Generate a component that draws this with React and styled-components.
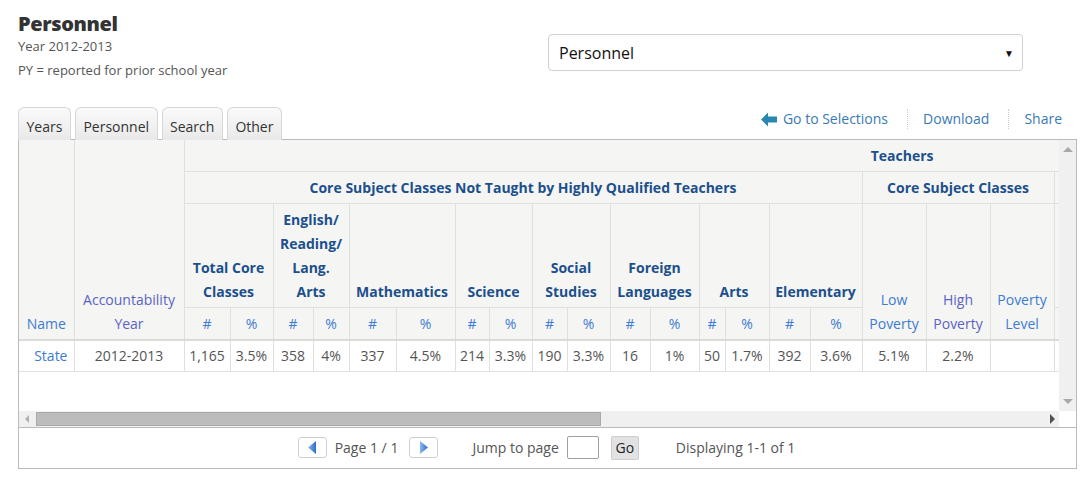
import React from "react";
import styled, { createGlobalStyle } from "styled-components";

const Global = createGlobalStyle`
  html, body { margin: 0; padding: 0; background: #fff; }
  body { font-family: "Open Sans", "Liberation Sans", sans-serif; color: #555; }
  * { box-sizing: border-box; }
`;

const Page = styled.div`
  width: 1084px;
  padding: 11px 7px 0 18px;
`;

const TopRow = styled.div`
  display: flex;
  align-items: flex-start;
`;

const TitleBlock = styled.div`
  width: 530px;
`;

const Title = styled.h1`
  margin: 0;
  font-size: 20px;
  line-height: 26px;
  font-weight: 800;
  color: #333;
  letter-spacing: -0.4px;
`;

const SubLine = styled.div`
  font-size: 13px;
  line-height: 18px;
  color: #555;
  margin-top: ${(p) => p.$mt || 0}px;
`;

const SelectBox = styled.div`
  margin-top: 23px;
  width: 475px;
  height: 37px;
  border: 1px solid #d0d0d0;
  border-radius: 4px;
  display: flex;
  align-items: center;
  justify-content: space-between;
  padding: 0 8px 0 10px;
  font-size: 16px;
  color: #111;
`;

const Caret = styled.span`
  font-size: 10px;
  color: #111;
`;

const TabRow = styled.div`
  margin-top: 28px;
  display: flex;
  justify-content: space-between;
  align-items: flex-start;
  height: 32px;
  position: relative;
  z-index: 1;
`;

const Tabs = styled.div`
  display: flex;
  gap: 4px;
`;

const Tab = styled.div`
  height: 33px;
  padding: 4px 7.5px 0;
  display: flex;
  align-items: center;
  font-size: 14px;
  color: #333;
  border: 1px solid #d6d6d6;
  border-bottom: none;
  border-radius: 6px 6px 0 0;
  background: linear-gradient(#fafafa, #e9e9e9);
`;

const Links = styled.div`
  display: flex;
  align-items: center;
  margin-top: 2px;
`;

const LinkItem = styled.a`
  display: flex;
  align-items: center;
  gap: 6px;
  padding: 0 ${(p) => (p.$last ? 15 : 19)}px 0 ${(p) => (p.$sep ? 15 : 16)}px;
  font-size: 14px;
  line-height: 20px;
  color: #3a7ab4;
  text-decoration: none;
  border-left: ${(p) => (p.$sep ? "1px dotted #cfcfcf" : "none")};
`;

const Grid = styled.div`
  width: 1059px;
  border: 1px solid #bbb;
  background: #fff;
`;

const ScrollArea = styled.div`
  display: grid;
  grid-template-columns: 1040px 17px;
  grid-template-rows: 271px 16px;
`;

const Viewport = styled.div`
  overflow: hidden;
  width: 1040px;
  height: 271px;
`;

const Table = styled.table`
  border-collapse: collapse;
  table-layout: fixed;
  font-size: 14px;
`;

const HeadCell = styled.th`
  background: #f5f6f4;
  border: 1px solid #dfe1de;
  border-top: none;
  padding: 4px 4px 3px;
  line-height: 24px;
  text-align: center;
  vertical-align: ${(p) => (p.$top ? "middle" : "bottom")};
  font-weight: ${(p) => (p.$leaf ? 400 : 700)};
  color: ${(p) => (p.$leaf ? (p.$visited ? "#5b62c6" : "#3d7bd2") : "#1c4f8c")};
  border-bottom: ${(p) => (p.$last ? "2px solid #d9dbd8" : "1px solid #dfe1de")};
  &:first-child { border-left: none; }
`;

const DataCell = styled.td`
  border: 1px solid #dfe1de;
  padding: 4px;
  height: 31px;
  line-height: 22px;
  text-align: ${(p) => (p.$right ? "right" : "center")};
  padding-right: ${(p) => (p.$right ? 6 : 4)}px;
  color: ${(p) => (p.$link ? "#3d7bd2" : "#555")};
  white-space: nowrap;
  &:first-child { border-left: none; }
`;

const VTrack = styled.div`
  background: #f0f0f0;
  display: flex;
  flex-direction: column;
  justify-content: space-between;
  align-items: center;
  padding: 7px 0 7px;
`;

const HTrack = styled.div`
  background: #f0f0f0;
  display: flex;
  align-items: center;
  padding: 0 4px 0 6px;
  gap: 7px;
`;

const Thumb = styled.div`
  height: 14px;
  width: 565px;
  background: #bcbcbc;
  border: 1px solid #a9a9a9;
`;

const Spacer = styled.div`
  flex: 1;
`;

const Corner = styled.div`
  background: #fff;
`;

const Pager = styled.div`
  border-top: 1px solid #bbb;
  height: 41px;
  display: flex;
  align-items: center;
  justify-content: center;
  font-size: 14px;
  color: #555;
  padding-right: 2px;
  padding-bottom: 1px;
`;

const PagerGroup = styled.div`
  display: flex;
  align-items: center;
  gap: ${(p) => p.$gap}px;
  margin-right: ${(p) => p.$mr || 0}px;
`;

const NavButton = styled.button`
  width: 29px;
  height: 21px;
  border: 1px solid #cfcfcf;
  border-radius: 3px;
  background: #fff;
  display: flex;
  align-items: center;
  justify-content: center;
  padding: 0;
  margin-left: ${(p) => p.$ml || 0}px;
`;

const PageInput = styled.div`
  width: 32px;
  height: 23px;
  border: 1px solid #a0a0a0;
  border-radius: 2px;
  background: #fff;
`;

const GoButton = styled.button`
  height: 24px;
  width: 28px;
  padding: 0;
  font-family: "Open Sans", "Liberation Sans", sans-serif;
  font-size: 14px;
  color: #222;
  background: #e2e2e2;
  border: 1px solid #cdcdcd;
  border-radius: 2px;
  margin-left: 4px;
`;

const ArrowLeftIcon = () => (
  <svg width="16" height="15" viewBox="0 0 16 15">
    <polygon points="0,7.5 7,0.5 7,4.5 16,4.5 16,10.5 7,10.5 7,14.5" fill="#2a88b0" />
  </svg>
);

const Tri = ({ dir, color, size = 5 }) => {
  const s = size;
  const pts =
    dir === "left"
      ? `${s},0 ${s},${2 * s} 0,${s}`
      : dir === "right"
      ? `0,0 0,${2 * s} ${s},${s}`
      : dir === "up"
      ? `0,${s} ${2 * s},${s} ${s},0`
      : `0,0 ${2 * s},0 ${s},${s}`;
  const w = dir === "left" || dir === "right" ? s : 2 * s;
  const h = dir === "left" || dir === "right" ? 2 * s : s;
  return (
    <svg width={w} height={h} viewBox={`0 0 ${w} ${h}`}>
      <polygon points={pts} fill={color} />
    </svg>
  );
};

const PagerArrow = ({ dir }) => (
  <svg width="8" height="13" viewBox="0 0 8 13">
    <defs>
      <linearGradient id={`pg-${dir}`} x1="0" x2="1" y1="0" y2="0">
        <stop offset="0" stopColor="#8bb8ee" />
        <stop offset="1" stopColor="#2c6cc8" />
      </linearGradient>
    </defs>
    <polygon
      points={dir === "left" ? "8,0 8,13 0,6.5" : "0,0 0,13 8,6.5"}
      fill={`url(#pg-${dir})`}
    />
  </svg>
);

const widths = [
  55, 110, 46, 43, 40, 36, 47, 59, 34, 43, 35, 43, 40, 49, 26, 44, 41, 52, 64, 64, 64,
  70, 70, 70, 70, 71, 72, 71, 72, 79, 79, 79,
];
const tableWidth = widths.reduce((a, b) => a + b, 0);

const subjects = [
  { label: ["Total Core", "Classes"], data: ["1,165", "3.5%"] },
  { label: ["English/", "Reading/", "Lang.", "Arts"], data: ["358", "4%"] },
  { label: ["Mathematics"], data: ["337", "4.5%"] },
  { label: ["Science"], data: ["214", "3.3%"] },
  { label: ["Social", "Studies"], data: ["190", "3.3%"] },
  { label: ["Foreign", "Languages"], data: ["16", "1%"] },
  { label: ["Arts"], data: ["50", "1.7%"] },
  { label: ["Elementary"], data: ["392", "3.6%"] },
];

const Lines = ({ items }) =>
  items.map((t, i) => (
    <React.Fragment key={i}>
      {i > 0 && <br />}
      {t}
    </React.Fragment>
  ));

export default function App() {
  return (
    <>
      <Global />
      <Page>
        <TopRow>
          <TitleBlock>
            <Title>Personnel</Title>
            <SubLine>Year 2012-2013</SubLine>
            <SubLine $mt={6}>PY = reported for prior school year</SubLine>
          </TitleBlock>
          <SelectBox>
            <span>Personnel</span>
            <Caret>▼</Caret>
          </SelectBox>
        </TopRow>

        <TabRow>
          <Tabs>
            <Tab>Years</Tab>
            <Tab>Personnel</Tab>
            <Tab>Search</Tab>
            <Tab>Other</Tab>
          </Tabs>
          <Links>
            <LinkItem>
              <ArrowLeftIcon />
              Go to Selections
            </LinkItem>
            <LinkItem $sep>Download</LinkItem>
            <LinkItem $sep $last>Share</LinkItem>
          </Links>
        </TabRow>

        <Grid>
          <ScrollArea>
            <Viewport>
              <Table style={{ width: tableWidth }}>
                <colgroup>
                  {widths.map((w, i) => (
                    <col key={i} style={{ width: w }} />
                  ))}
                </colgroup>
                <thead>
                  <tr>
                    <HeadCell $leaf rowSpan={4} $last>Name</HeadCell>
                    <HeadCell $leaf $visited rowSpan={4} $last>
                      Accountability<br />Year
                    </HeadCell>
                    <HeadCell colSpan={27} $top>Teachers</HeadCell>
                    <HeadCell colSpan={3} $top>Staff</HeadCell>
                  </tr>
                  <tr>
                    <HeadCell colSpan={16} $top>
                      Core Subject Classes Not Taught by Highly Qualified Teachers
                    </HeadCell>
                    <HeadCell colSpan={3} $top>Core Subject Classes</HeadCell>
                    <HeadCell colSpan={4} $top>Experience</HeadCell>
                    <HeadCell colSpan={4} $top>Credentials</HeadCell>
                    <HeadCell $leaf rowSpan={3} $last>Total</HeadCell>
                    <HeadCell $leaf rowSpan={3} $last>Ratio</HeadCell>
                    <HeadCell $leaf rowSpan={3} $last>Other</HeadCell>
                  </tr>
                  <tr>
                    {subjects.map((s, i) => (
                      <HeadCell key={i} colSpan={2}>
                        <Lines items={s.label} />
                      </HeadCell>
                    ))}
                    <HeadCell $leaf rowSpan={2} $last>Low<br />Poverty</HeadCell>
                    <HeadCell $leaf $visited rowSpan={2} $last>High<br />Poverty</HeadCell>
                    <HeadCell $leaf rowSpan={2} $last>Poverty<br />Level</HeadCell>
                    <HeadCell colSpan={2}>0-3<br />Years</HeadCell>
                    <HeadCell colSpan={2}>4+<br />Years</HeadCell>
                    <HeadCell colSpan={2}>Full</HeadCell>
                    <HeadCell colSpan={2}>Emergency</HeadCell>
                  </tr>
                  <tr>
                    {subjects.map((s, i) => (
                      <React.Fragment key={i}>
                        <HeadCell $leaf $last>#</HeadCell>
                        <HeadCell $leaf $last>%</HeadCell>
                      </React.Fragment>
                    ))}
                    {[0, 1, 2, 3].map((i) => (
                      <React.Fragment key={`x${i}`}>
                        <HeadCell $leaf $last>#</HeadCell>
                        <HeadCell $leaf $last>%</HeadCell>
                      </React.Fragment>
                    ))}
                  </tr>
                </thead>
                <tbody>
                  <tr>
                    <DataCell $right $link>State</DataCell>
                    <DataCell>2012-2013</DataCell>
                    {subjects.map((s, i) => (
                      <React.Fragment key={i}>
                        <DataCell>{s.data[0]}</DataCell>
                        <DataCell>{s.data[1]}</DataCell>
                      </React.Fragment>
                    ))}
                    <DataCell>5.1%</DataCell>
                    <DataCell>2.2%</DataCell>
                    <DataCell></DataCell>
                    {Array.from({ length: 11 }).map((_, i) => (
                      <DataCell key={`e${i}`}></DataCell>
                    ))}
                  </tr>
                </tbody>
              </Table>
            </Viewport>
            <VTrack>
              <Tri dir="up" color="#a8a8a8" size={5} />
              <Tri dir="down" color="#a8a8a8" size={5} />
            </VTrack>
            <HTrack>
              <Tri dir="left" color="#b0b0b0" size={4} />
              <Thumb />
              <Spacer />
              <Tri dir="right" color="#505050" size={5} />
            </HTrack>
            <Corner />
          </ScrollArea>
          <Pager>
            <PagerGroup $gap={8} $mr={34}>
              <NavButton>
                <PagerArrow dir="left" />
              </NavButton>
              <span>Page 1 / 1</span>
              <NavButton $ml={3}>
                <PagerArrow dir="right" />
              </NavButton>
            </PagerGroup>
            <PagerGroup $gap={8} $mr={37}>
              <span>Jump to page</span>
              <PageInput />
              <GoButton>Go</GoButton>
            </PagerGroup>
            <span>Displaying 1-1 of 1</span>
          </Pager>
        </Grid>
      </Page>
    </>
  );
}
